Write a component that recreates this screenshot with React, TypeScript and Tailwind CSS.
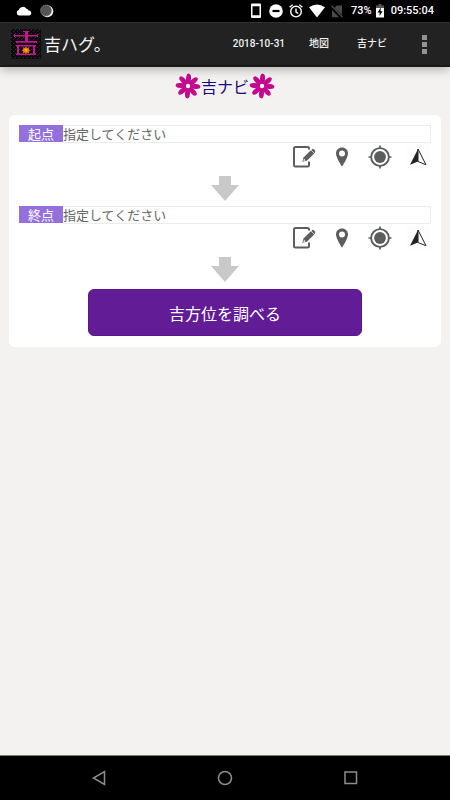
import type { ReactNode } from 'react';

const PETALS = [0, 45, 90, 135, 180, 225, 270, 315];

const Flower = () => (
  <svg viewBox="0 0 26 26" className="size-[26px] shrink-0" aria-hidden="true">
    {PETALS.map((angle) => (
      <ellipse
        key={angle}
        cx="13"
        cy="5.500"
        rx="2.500"
        ry="4.900"
        fill="#c4098f"
        transform={`rotate(${angle + 4} 13 13)`}
      />
    ))}
    <circle cx="13" cy="13" r="5.200" fill="#c4098f" />
    <circle cx="13" cy="13" r="2.200" fill="#fbf3f9" />
  </svg>
);

const AppLogo = () => (
  <svg viewBox="0 0 30 30" className="size-[30px] shrink-0" aria-hidden="true">
    <defs>
      <pattern id="weave" width="4" height="4" patternUnits="userSpaceOnUse">
        <rect width="4" height="4" fill="#0c0c0c" />
        <rect width="1" height="1" fill="#303030" />
        <rect x="2" y="2" width="1" height="1" fill="#282828" />
        <rect x="3" y="1" width="1" height="1" fill="#1e1e1e" />
      </pattern>
    </defs>
    <rect width="30" height="30" fill="url(#weave)" />
    <g fill="#c5148f">
      <rect x="14" y="2" width="3" height="11" />
      <rect x="12" y="2" width="6" height="1" />
      <rect x="4" y="6" width="22" height="1.500" />
      <rect x="3" y="5" width="1" height="3" />
      <rect x="26" y="5" width="1" height="3" />
      <rect x="6" y="12" width="19" height="1.700" />
      <rect x="5" y="12" width="1" height="2" />
      <rect x="25" y="12" width="1" height="2" />
      <rect x="5" y="16" width="20" height="1.500" />
      <rect x="6" y="17" width="2" height="9" />
      <rect x="22" y="17" width="2" height="9" />
      <rect x="5" y="24.500" width="20" height="1.500" />
    </g>
    <path d="M15 17.500l1 1.500 2-.8-.3 2 1.500 1-1.500 1 .3 2-2-.6-1 1.400-1-1.400-2 .6.3-2-1.500-1 1.500-1-.3-2 2 .8Z" fill="#ff7a00" />
    <circle cx="15" cy="21" r="1.200" fill="#ffab1a" />
  </svg>
);

const EditIcon = () => (
  <svg viewBox="0 0 24 24" className="size-6" fill="none" aria-hidden="true">
    <path d="M17 4.500V3.500Q17 2 15.500 2H3.500Q2 2 2 3.500V20Q2 21.500 3.500 21.500H15.500Q17 21.500 17 20V16.500" stroke="#5c5d5e" strokeWidth="2" />
    <path d="M10.300 16.800L11.500 12.600L18.800 5.300L22.300 8.600L14.800 15.800Z" fill="#5c5d5e" />
    <path d="M19.400 4.900L20.400 4Q21.200 3.600 21.900 4.300L23 5.500Q23.700 6.300 23 7L22.600 8.200Z" fill="#5c5d5e" />
    <path d="M12 13.800L13.600 15.400L11.300 16Z" fill="#fff" />
  </svg>
);

const PinIcon = () => (
  <svg viewBox="0 0 24 24" className="size-6" aria-hidden="true">
    <path
      d="M12 2.500C8.600 2.500 6 5.100 6 8.400C6 12.700 12 21.500 12 21.500S18 12.700 18 8.400C18 5.100 15.400 2.500 12 2.500ZM12 5.500A3 3 0 1 1 12 11.500A3 3 0 1 1 12 5.500Z"
      fill="#5c5d5e"
    />
  </svg>
);

const TargetIcon = () => (
  <svg viewBox="0 0 24 24" className="size-6" fill="none" aria-hidden="true">
    <circle cx="12" cy="12" r="8.900" stroke="#5c5d5e" strokeWidth="1.900" />
    <circle cx="12" cy="12" r="5.900" fill="#5c5d5e" />
    <path d="M12 .5V4M12 20V23.500M.5 12H4M20 12H23.500" stroke="#5c5d5e" strokeWidth="1.700" />
  </svg>
);

const CompassIcon = () => (
  <svg viewBox="0 0 24 24" className="size-6 bg-[#fdfdfd]" aria-hidden="true">
    <path d="M12 4V16.500L4 19.800Z" fill="#222326" />
    <path d="M12 4V16.500L20 19.800Z" fill="#fff" stroke="#222326" strokeWidth="1" strokeLinejoin="round" />
  </svg>
);

const DownArrow = () => (
  <svg viewBox="0 0 28 25" className="mx-auto h-[25px] w-7" aria-hidden="true">
    <path d="M8 0H20V9H28L14 25L0 9H8Z" fill="#c9c9c9" />
  </svg>
);

const IconButton = ({ label, children }: { label: string; children: ReactNode }) => (
  <button type="button" aria-label={label} className="flex size-6 items-center justify-center">
    {children}
  </button>
);

const PointField = ({ id, label }: { id: string; label: string }) => (
  <div>
    <div className="flex h-[18px]">
      <label
        htmlFor={id}
        className="h-[17px] w-11 shrink-0 bg-[#9370db] text-center text-[13px] leading-[17px] text-white"
      >
        {label}
      </label>
      <input
        id={id}
        type="text"
        placeholder="指定してください"
        className="min-w-0 flex-1 border border-l-0 border-[#ececec] bg-white text-[13px] leading-4 text-[#666] outline-none placeholder:text-[#666]"
      />
    </div>
    <div className="flex justify-end gap-[14px] pt-[2px] pr-px">
      <IconButton label="住所を入力">
        <EditIcon />
      </IconButton>
      <IconButton label="地図から選ぶ">
        <PinIcon />
      </IconButton>
      <IconButton label="現在地">
        <TargetIcon />
      </IconButton>
      <IconButton label="ナビ">
        <CompassIcon />
      </IconButton>
    </div>
    <div className="pt-[7px] pb-[5px]">
      <DownArrow />
    </div>
  </div>
);

const StatusBar = () => (
  <div className="flex h-[22px] items-center bg-black pr-4 pl-4 font-[Roboto,sans-serif] text-[11px] leading-6 font-medium text-white">
    <svg viewBox="0 0 16 10" className="h-[10px] w-4" aria-hidden="true">
      <path d="M3 9.500A2.800 2.800 0 0 1 2.700 4.100A4.300 4.300 0 0 1 10.500 2.800A3 3 0 0 1 12.500 4.500A2.500 2.500 0 0 1 13 9.500Z" fill="#fff" />
    </svg>
    <svg viewBox="0 0 14 14" className="ml-2 size-[14px]" aria-hidden="true">
      <circle cx="7.300" cy="7.300" r="6" fill="#eee" />
      <circle cx="6" cy="6.500" r="5.500" fill="#555" stroke="#888" strokeWidth="1" strokeDasharray="1 1" />
    </svg>
    <div className="ml-auto flex items-center">
      <svg viewBox="0 0 10 16" className="h-4 w-[10px]" aria-hidden="true">
        <path fillRule="evenodd" d="M1 .5H9Q10 .5 10 1.500V14Q10 15 9 15H1Q0 15 0 14V1.500Q0 .5 1 .5ZM1.500 3.200V12.200H8.500V3.200Z" fill="#fff" />
      </svg>
      <svg viewBox="0 0 14 14" className="ml-2 size-[14px]" aria-hidden="true">
        <circle cx="7" cy="7" r="6.800" fill="#fff" />
        <rect x="3.500" y="5.900" width="7" height="2.200" fill="#000" />
      </svg>
      <svg viewBox="0 0 14 14" className="ml-[6px] size-[14px]" fill="none" stroke="#fff" strokeWidth="1.400" aria-hidden="true">
        <circle cx="7" cy="7.600" r="5.300" />
        <path d="M7 4.500V8L9.300 9.500M.6 3.300L3.600 .8M13.400 3.300L10.400 .8" />
      </svg>
      <svg viewBox="0 0 16 14" className="ml-[6px] h-[14px] w-4" aria-hidden="true">
        <path d="M0 3.200Q8 -2 16 3.200L8 13.500Z" fill="#fff" />
      </svg>
      <svg viewBox="0 0 12 13" className="ml-[6px] h-[13px] w-3" aria-hidden="true">
        <path d="M11 .5V10L3.500 2.800L6 .5ZM1 5L8 12.300H1Z" fill="#4a4a4a" />
        <path d="M.5 .8L11.500 12.300" stroke="#4a4a4a" strokeWidth="1.300" />
      </svg>
      <span className="ml-2">73%</span>
      <svg viewBox="0 0 8 14" className="ml-1 h-[14px] w-2" aria-hidden="true">
        <path d="M2.500 0H5.500V1.500H8V4H0V1.500H2.500Z" fill="#555" />
        <rect y="4" width="8" height="9.500" fill="#fff" />
        <path d="M4.800 3.500L1.500 8.600H3.600V12L6.500 7.200H4.600Z" fill="#000" />
      </svg>
      <span className="ml-[7px]">09:55:04</span>
    </div>
  </div>
);

const AppBar = () => (
  <header className="relative flex h-[45px] items-center border-t border-b-2 border-t-[#303030] border-b-[#1c1819] bg-[#222] pl-[11px] text-[#f3f3f3] shadow-[0_2px_10px_rgba(0,0,0,0.3)]">
    <AppLogo />
    <h1 className="ml-[3px] text-[17px] leading-6">吉ハグ。</h1>
    <nav className="ml-auto flex items-center pr-[11px] font-[Roboto,'Noto_Sans_CJK_JP',sans-serif] text-[10px] leading-4 font-medium">
      <button type="button">2018-10-31</button>
      <button type="button" className="ml-6">
        地図
      </button>
      <button type="button" className="ml-7">
        吉ナビ
      </button>
      <button type="button" aria-label="メニュー" className="ml-[22px] flex w-[30px] flex-col items-center gap-[2px]">
        <span className="size-[5px] bg-[#929292]" />
        <span className="size-[5px] bg-[#929292]" />
        <span className="size-[5px] bg-[#929292]" />
      </button>
    </nav>
  </header>
);

const NavBar = () => (
  <footer className="flex h-[45px] items-center justify-center gap-[102px] border-t border-[#777b76] bg-black">
    <button type="button" aria-label="戻る">
      <svg viewBox="0 0 24 24" className="size-6" fill="none" stroke="#8d8d8d" strokeWidth="1.500" aria-hidden="true">
        <path d="M17.500 5.500V18.500L6.500 12Z" />
      </svg>
    </button>
    <button type="button" aria-label="ホーム">
      <svg viewBox="0 0 24 24" className="size-6" fill="none" stroke="#8d8d8d" strokeWidth="1.500" aria-hidden="true">
        <circle cx="12" cy="12" r="6.500" />
      </svg>
    </button>
    <button type="button" aria-label="履歴">
      <svg viewBox="0 0 24 24" className="size-6" fill="none" stroke="#8d8d8d" strokeWidth="1.500" aria-hidden="true">
        <rect x="6" y="6" width="11.500" height="11.500" />
      </svg>
    </button>
  </footer>
);

const App = () => {
  return (
    <div lang="ja" className="flex min-h-screen flex-col bg-[#f3f2f0] font-['Noto_Sans_CJK_JP',sans-serif]">
      <StatusBar />
      <AppBar />

      <main className="flex-1">
        <h2 className="flex items-center justify-center pt-[6px] text-[16px] leading-6 text-[#1a0a7c]">
          <Flower />
          吉ナビ
          <Flower />
        </h2>

        <form className="mx-[9px] mt-4 rounded-md bg-white px-[10px] pt-[10px] pb-[11px]">
          <PointField id="start" label="起点" />
          <PointField id="goal" label="終点" />
          <button
            type="button"
            className="mx-auto mt-[2px] block h-[47px] w-2/3 rounded-md border border-[#5a1590] bg-[#611c96] text-[16px] leading-6 text-white"
          >
            吉方位を調べる
          </button>
        </form>
      </main>

      <NavBar />
    </div>
  );
};

export default App;
